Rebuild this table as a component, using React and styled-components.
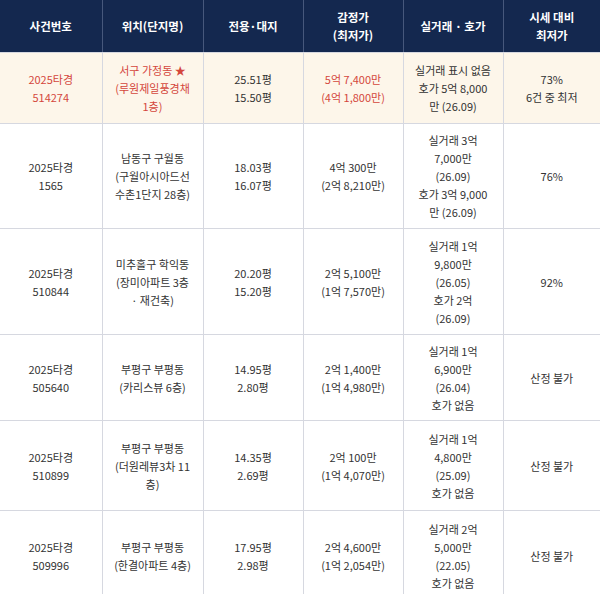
import React from 'react';
import styled, { createGlobalStyle } from 'styled-components';

const GlobalStyle = createGlobalStyle`
  html, body {
    margin: 0;
    padding: 0;
    background: #ffffff;
  }
  body {
    font-family: "Noto Sans CJK KR", "Noto Sans", sans-serif;
  }
`;

const Table = styled.table`
  width: 600px;
  border-collapse: collapse;
  table-layout: fixed;
  font-size: 11px;
  line-height: 18px;
  color: #333333;
`;

const HeadCell = styled.th`
  background: #14284f;
  color: #ffffff;
  font-weight: 700;
  font-size: 11.5px;
  height: 52px;
  padding: 0 6px;
  text-align: center;
  vertical-align: middle;
  border-left: 1px solid #47587c;
  border-bottom: 1px solid #d6d8e0;

  &:first-child {
    border-left: none;
  }
`;

const Row = styled.tr`
  height: ${(p) => p.h}px;
  background: ${(p) => (p.highlight ? '#fdf6ea' : '#ffffff')};
  color: ${(p) => (p.highlight ? '#d4463c' : '#333333')};
`;

const Cell = styled.td`
  padding: 0 8px;
  text-align: center;
  vertical-align: middle;
  border-left: 1px solid #d6d8e0;
  border-bottom: 1px solid #d6d8e0;
  color: ${(p) => (p.plain ? '#333333' : 'inherit')};

  &:first-child {
    border-left: none;
  }
`;

const columns = [
  { w: 102, label: ['사건번호'] },
  { w: 101, label: ['위치(단지명)'] },
  { w: 100, label: ['전용·대지'] },
  { w: 100, label: ['감정가', '(최저가)'] },
  { w: 100, label: ['실거래 · 호가'] },
  { w: 97, label: ['시세 대비', '최저가'] },
];

const rows = [
  {
    h: 71,
    highlight: true,
    cells: [
      ['2025타경', '514274'],
      ['서구 가정동 ★', '(루원제일풍경채', '1층)'],
      ['25.51평', '15.50평'],
      ['5억 7,400만', '(4억 1,800만)'],
      ['실거래 표시 없음', '호가 5억 8,000', '만 (26.09)'],
      ['73%', '6건 중 최저'],
    ],
    plain: [2, 4, 5],
  },
  {
    h: 105,
    cells: [
      ['2025타경', '1565'],
      ['남동구 구월동', '(구월아시아드선', '수촌1단지 28층)'],
      ['18.03평', '16.07평'],
      ['4억 300만', '(2억 8,210만)'],
      ['실거래 3억', '7,000만', '(26.09)', '호가 3억 9,000', '만 (26.09)'],
      ['76%'],
    ],
  },
  {
    h: 106,
    cells: [
      ['2025타경', '510844'],
      ['미추홀구 학익동', '(장미아파트 3층', '· 재건축)'],
      ['20.20평', '15.20평'],
      ['2억 5,100만', '(1억 7,570만)'],
      ['실거래 1억', '9,800만', '(26.05)', '호가 2억', '(26.09)'],
      ['92%'],
    ],
  },
  {
    h: 86,
    cells: [
      ['2025타경', '505640'],
      ['부평구 부평동', '(카리스뷰 6층)'],
      ['14.95평', '2.80평'],
      ['2억 1,400만', '(1억 4,980만)'],
      ['실거래 1억', '6,900만', '(26.04)', '호가 없음'],
      ['산정 불가'],
    ],
  },
  {
    h: 90,
    cells: [
      ['2025타경', '510899'],
      ['부평구 부평동', '(더원레뷰3차 11', '층)'],
      ['14.35평', '2.69평'],
      ['2억 100만', '(1억 4,070만)'],
      ['실거래 1억', '4,800만', '(25.09)', '호가 없음'],
      ['산정 불가'],
    ],
  },
  {
    h: 90,
    cells: [
      ['2025타경', '509996'],
      ['부평구 부평동', '(한결아파트 4층)'],
      ['17.95평', '2.98평'],
      ['2억 4,600만', '(1억 2,054만)'],
      ['실거래 2억', '5,000만', '(22.05)', '호가 없음'],
      ['산정 불가'],
    ],
  },
];

const Lines = ({ items }) =>
  items.map((t, i) => (
    <React.Fragment key={i}>
      {i > 0 && <br />}
      {t}
    </React.Fragment>
  ));

export default function App() {
  return (
    <>
      <GlobalStyle />
      <Table>
        <colgroup>
          {columns.map((c, i) => (
            <col key={i} style={{ width: c.w }} />
          ))}
        </colgroup>
        <thead>
          <tr>
            {columns.map((c, i) => (
              <HeadCell key={i}>
                <Lines items={c.label} />
              </HeadCell>
            ))}
          </tr>
        </thead>
        <tbody>
          {rows.map((r, i) => (
            <Row key={i} h={r.h} highlight={r.highlight}>
              {r.cells.map((c, j) => (
                <Cell key={j} plain={r.plain && r.plain.includes(j)}>
                  <Lines items={c} />
                </Cell>
              ))}
            </Row>
          ))}
        </tbody>
      </Table>
    </>
  );
}
